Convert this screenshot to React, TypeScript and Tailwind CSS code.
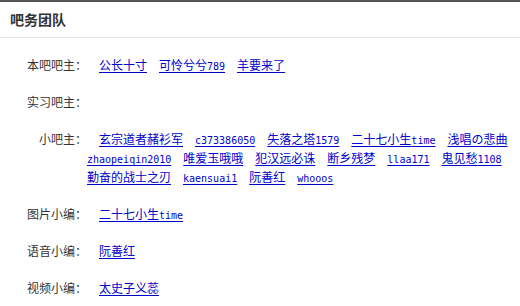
const rows: { label: string; links: string[] }[] = [
  { label: "本吧吧主：", links: ["公长十寸", "可怜兮兮789", "羊要来了"] },
  { label: "实习吧主：", links: [] },
  {
    label: "小吧主：",
    links: [
      "玄宗道者赭衫军",
      "c373386050",
      "失落之塔1579",
      "二十七小生time",
      "浅唱の悲曲",
      "zhaopeiqin2010",
      "唯爱玉哦哦",
      "犯汉远必诛",
      "断乡残梦",
      "llaa171",
      "鬼见愁1108",
      "勤奋的战士之刃",
      "kaensuai1",
      "阮善红",
      "whooos",
    ],
  },
  { label: "图片小编：", links: ["二十七小生time"] },
  { label: "语音小编：", links: ["阮善红"] },
  { label: "视频小编：", links: ["太史子义蕊"] },
];

// latin runs are half width in the original, so give them a narrow mono face
const LinkText = ({ text }: { text: string }) => {
  const parts = text.split(/([\x00-\x7f]+)/).filter((p) => p !== "");
  return (
    <>
      {parts.map((p, i) =>
        /^[\x00-\x7f]+$/.test(p) ? (
          <span key={i} className="text-[10px] leading-[10px] font-['DejaVu_Sans_Mono',monospace]">
            {p}
          </span>
        ) : (
          <span key={i}>{p}</span>
        )
      )}
    </>
  );
};

const App = () => {
  return (
    <div className="w-[520px] h-[306px] bg-white overflow-hidden font-['Noto_Sans_CJK_SC',sans-serif] text-[12px] text-[#333]">
      <div className="h-[38px] border-t-2 border-b border-t-[#555] border-b-[#e5e5e5] flex items-center pl-[10px]">
        <h2 className="text-[14px] font-bold text-[#333]">吧务团队</h2>
      </div>
      <div className="pt-[17px] pr-[10px] flex flex-col gap-[18px]">
        {rows.map((row) => (
          <div key={row.label} className="flex leading-[19px]">
            <div className="w-[87px] h-[19px] shrink-0 text-right">{row.label}</div>
            <div className="flex-1 flex flex-wrap gap-x-3">
              <span className="w-0 h-[19px]" />
              {row.links.map((l, i) => (
                <a
                  key={i}
                  href="#"
                  className="block h-[19px] whitespace-nowrap text-[#0000cc] underline underline-offset-2"
                >
                  <LinkText text={l} />
                </a>
              ))}
            </div>
          </div>
        ))}
      </div>
    </div>
  );
};

export default App;
